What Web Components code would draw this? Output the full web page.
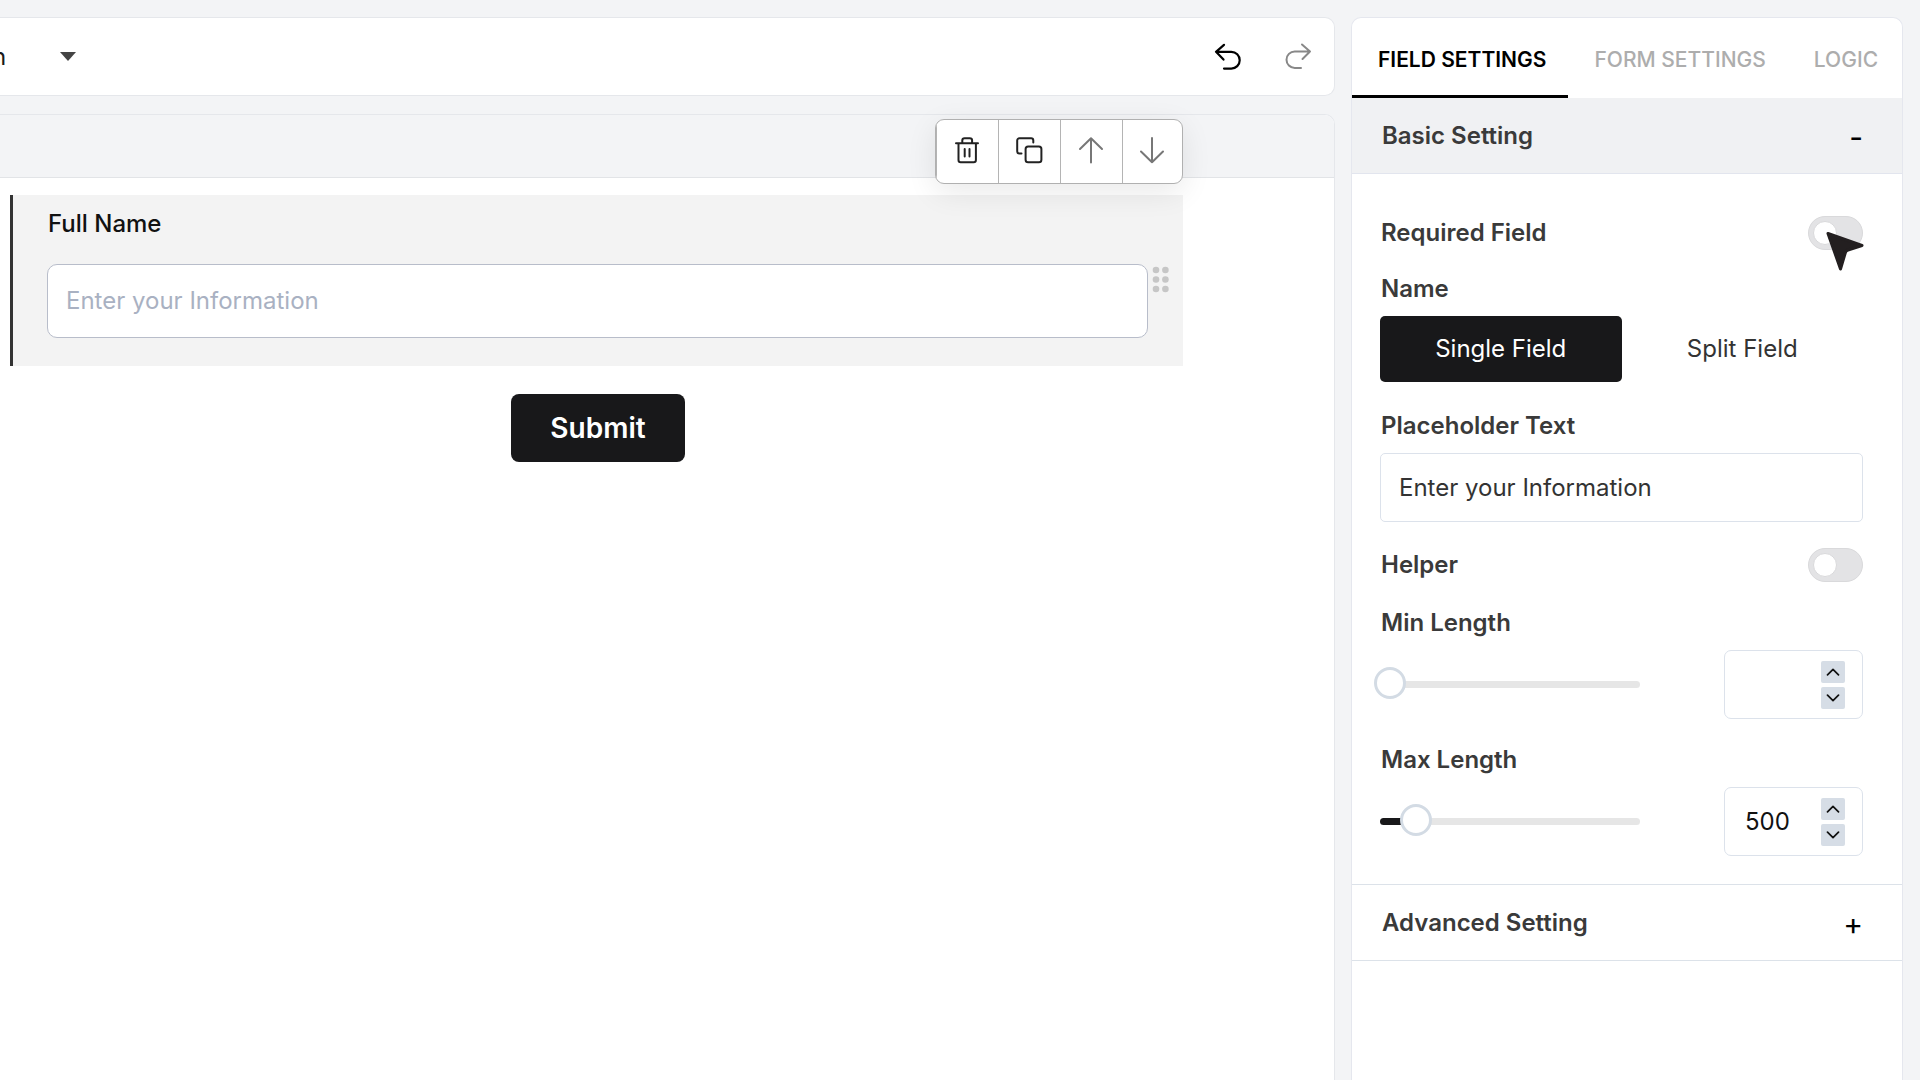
<!DOCTYPE html>
<html lang="en">
<head>
<meta charset="utf-8">
<title>Form builder</title>
<style>
  html, body { margin: 0; height: 100%; }
  body { background: #f3f4f6; font-family: Inter, "Liberation Sans", sans-serif; font-size: 24px; line-height: 30px; color: #333; overflow: hidden; }
</style>
</head>
<body>
<form-builder></form-builder>
<script>
const base = `
  *, *::before, *::after { box-sizing: border-box; }
  button, input, select { font: inherit; color: inherit; margin: 0; }
  button { border: 0; background: none; padding: 0; cursor: pointer; }
  svg { display: block; fill: none; stroke: currentColor; stroke-linecap: round; stroke-linejoin: round; }
`;
function define(name, css, html) {
  customElements.define(name, class extends HTMLElement {
    connectedCallback() {
      if (this.shadowRoot) return;
      const root = this.attachShadow({ mode: 'open' });
      root.innerHTML = `<style>${base}${css}</style>` + (typeof html === 'function' ? html(this) : html);
    }
  });
}

define('top-bar', `
  :host { display: flex; align-items: center; height: 79px; background: #fff; border: 1px solid #e5e7eb; border-left: 0; border-radius: 0 10px 10px 0; padding-right: 22px; }
  label { display: flex; align-items: center; flex: 1; gap: 53px; margin-left: -8px; color: #1a1a1a; }
  select { appearance: none; border: 0; background: none; padding: 0; outline: 0; }
  .caret { fill: #444; stroke: none; }
  .history { display: flex; gap: 42px; }
  .undo { color: #000; }
  .redo { color: #888; }
`, `
  <label>
    <select aria-label="Form"><option>n</option></select>
    <svg class="caret" width="16" height="9" viewBox="0 0 16 9"><path d="M0 0h16L8 9z"/></svg>
  </label>
  <div class="history">
    <button class="undo" aria-label="Undo"><svg width="28" height="28" viewBox="0 0 28 28" stroke-width="2.2"><path d="M10 1.800 2 8.800l7.500 7.800M2 8.800h15.300a8.400 8.400 0 0 1 0 16.800H10"/></svg></button>
    <button class="redo" aria-label="Redo"><svg width="28" height="28" viewBox="0 0 28 28" stroke-width="2"><path d="m18 1.500 8 7-7.500 7.500M26 8.500H10.700a8.200 8.200 0 0 0 0 16.400H17"/></svg></button>
  </div>
`);

define('block-toolbar', `
  :host { display: flex; border: 1px solid #b0b0b0; border-radius: 9px; background: #fff; box-shadow: 0 8px 30px rgba(0,0,0,.09); overflow: hidden; }
  button { width: 62px; height: 63px; display: grid; place-items: center; color: #222; border-left: 1px solid #b4b4b4; padding: 0 2px 4px 0; }
  button:first-child, button:last-child { width: 60px; }
  button:first-child { border-left: 0; }
  .move { color: #777; }
`, `
  <button aria-label="Delete"><svg width="28" height="28" viewBox="0 0 28 28" stroke-width="2"><path d="M3 7.200h22M5.500 7.200V24a2.200 2.200 0 0 0 2.200 2.200h13A2.200 2.200 0 0 0 22.900 24V7.200M9.300 7V4.500A2.300 2.300 0 0 1 11.600 2.200h5.200a2.300 2.300 0 0 1 2.300 2.300V7M11.700 13v7.500M16.500 13v7.500"/></svg></button>
  <button aria-label="Duplicate"><svg width="28" height="28" viewBox="0 0 28 28" stroke-width="2"><rect x="10.600" y="10.400" width="15.800" height="15.800" rx="2.500"/><path d="M18.300 6.500V4.400a2.200 2.200 0 0 0-2.200-2.200H4.400a2.200 2.200 0 0 0-2.200 2.200v10.800a2.200 2.200 0 0 0 2.200 2.200H6.500"/></svg></button>
  <button class="move" aria-label="Move up"><svg width="28" height="28" viewBox="0 0 28 28" stroke-width="2"><path d="M14 26.500V2.200M3 13 14 2.200 25 13"/></svg></button>
  <button class="move" aria-label="Move down"><svg width="28" height="28" viewBox="0 0 28 28" stroke-width="2"><path d="M14 2v24.300M3 15.500l11 10.800 11-10.800"/></svg></button>
`);

define('form-block', `
  :host { display: block; position: relative; background: #f3f3f3; border-left: 3px solid #333; padding: 14px 35px 28px 34px; }
  label { display: block; font-weight: 500; color: #111; margin-bottom: 25px; padding-left: 1px; }
  input { display: block; width: 100%; height: 74px; border: 1px solid #b8bdca; border-radius: 10px; background: #fff; padding: 0 18px 2px; outline: 0; }
  input::placeholder { color: #a9b1c2; opacity: 1; }
  block-toolbar { position: absolute; right: 0; top: -76px; z-index: 1; }
  .grip { position: absolute; right: 13px; top: 71px; cursor: grab; color: #c6c6c6; }
  .grip svg { fill: currentColor; stroke: none; }
`, `
  <block-toolbar></block-toolbar>
  <label for="name">Full Name</label>
  <input id="name" type="text" placeholder="Enter your Information">
  <button class="grip" aria-label="Drag"><svg width="18" height="27" viewBox="0 0 18 27"><circle cx="4" cy="4" r="3.300"/><circle cx="13.400" cy="4" r="3.300"/><circle cx="4" cy="13.500" r="3.300"/><circle cx="13.400" cy="13.500" r="3.300"/><circle cx="4" cy="23" r="3.300"/><circle cx="13.400" cy="23" r="3.300"/></svg></button>
`);

define('form-canvas', `
  :host { display: flex; flex-direction: column; flex: 1; background: #fff; border: 1px solid #e5e7eb; border-left: 0; border-bottom: 0; border-top-right-radius: 10px; }
  header { height: 63px; background: #f3f4f6; border-bottom: 1px solid #e2e4e7; border-top-right-radius: 9px; }
  main { display: flex; flex-direction: column; gap: 28px; padding: 17px 151px 0 13px; }
  form-block { margin-left: -3px; }
  .submit { align-self: center; height: 68px; padding: 0 39px; border-radius: 8px; background: #18181a; color: #fff; font-size: 28px; font-weight: 600; }
`, `
  <header></header>
  <main>
    <form-block></form-block>
    <button class="submit" type="submit">Submit</button>
  </main>
`);

define('setting-section', `
  :host { display: block; }
  .head { display: flex; justify-content: space-between; align-items: center; width: 100%; height: 76px; padding: 0 39px 0 30px; border-bottom: 1px solid #dce2e9; font-weight: 600; color: #3a3a3a; text-align: left; }
  :host([open]) .head { background: #f0f1f3; border-color: #e2e5ee; }
  .sign { font-size: 30px; font-weight: 400; color: #000; padding-top: 2px; }
  .body { padding: 42px 39px 28px 28px; border-bottom: 1px solid #dce2e9; }
  :host(:not([open])) .body { display: none; }
`, el => `
  <button class="head" aria-expanded="${el.hasAttribute('open')}"><span>${el.getAttribute('heading')}</span><span class="sign">${el.hasAttribute('open') ? '-' : '+'}</span></button>
  <div class="body"><slot></slot></div>
`);

define('toggle-row', `
  :host { display: flex; align-items: center; justify-content: space-between; height: 34px; position: relative; }
  label { font-weight: 600; color: #3a3a3a; padding-left: 1px; }
  input { appearance: none; width: 55px; height: 34px; border-radius: 17px; background: #e3e3e5; border: 1px solid #d9d9db; padding: 4px; display: flex; align-items: center; }
  input::before { content: ""; width: 24px; height: 24px; border-radius: 50%; background: #fff; border: 1px solid #d9d9db; }
  ::slotted(*) { position: absolute; right: -2px; top: 15px; }
`, el => `<label for="t">${el.getAttribute('label')}</label><input id="t" type="checkbox" role="switch"><slot></slot>`);

define('mouse-pointer', `
  :host { display: block; pointer-events: none; color: #231f20; }
  svg { fill: currentColor; }
`, `<svg width="40" height="41" viewBox="0 0 40 41" stroke-width="3"><path d="m3 2.500 34 12-14 4.500q-2 .7-2.600 2.500L15.500 38z"/></svg>`);

define('field-group', `
  :host { display: block; }
  .label { font-weight: 600; color: #3a3a3a; margin-bottom: 12px; padding-left: 1px; display: block; }
`, el => `<span class="label">${el.getAttribute('label')}</span><slot></slot>`);

define('segment-choice', `
  :host { display: grid; grid-template-columns: 1fr 1fr; }
  button { height: 66px; border-radius: 5px; }
  button[aria-pressed=true] { background: #18181a; color: #fff; }
`, `<button aria-pressed="true">Single Field</button><button aria-pressed="false">Split Field</button>`);

define('text-box', `
  :host { display: block; }
  label { font-weight: 600; color: #3a3a3a; margin-bottom: 12px; padding-left: 1px; display: block; }
  input { display: block; width: 100%; height: 69px; padding: 0 18px; border: 1px solid #dce2eb; border-radius: 5px; background: #fff; outline: 0; }
`, el => `<label for="i">${el.getAttribute('label')}</label><input id="i" type="text" value="${el.getAttribute('value')}">`);

define('length-control', `
  :host { display: block; }
  label { font-weight: 600; color: #3a3a3a; margin-bottom: 12px; padding-left: 1px; display: block; }
  .row { display: flex; align-items: center; justify-content: space-between; }
  .slider { display: grid; align-items: center; width: 260px; }
  .slider > * { grid-area: 1 / 1; }
  .track { height: 7px; border-radius: 4px; background: linear-gradient(#18181a, #18181a) 0 0 / var(--fill) 100% no-repeat #e6e6e6; }
  input[type=range] { appearance: none; background: none; height: 36px; margin-left: -6px; padding-bottom: 4px; outline: 0; }
  input[type=range]::-webkit-slider-thumb { appearance: none; width: 32px; height: 32px; border-radius: 50%; background: #fff; border: 3px solid #d3dbe4; }
  .number { display: flex; align-items: center; width: 139px; height: 69px; border: 1px solid #dce2eb; border-radius: 7px; padding: 0 17px 0 20px; }
  input[type=number] { appearance: textfield; flex: 1; min-width: 0; border: 0; padding: 0; background: none; color: #111; outline: 0; }
  input[type=number]::-webkit-inner-spin-button { display: none; }
  .steps { display: grid; gap: 4px; }
  .steps button { width: 24px; height: 22px; border-radius: 2px; background: #d6dde6; color: #111; display: grid; place-items: center; }
`, el => {
  const v = el.getAttribute('value') || '';
  return `
  <label for="n">${el.getAttribute('label')}</label>
  <div class="row">
    <div class="slider">
      <div class="track" style="--fill:${v ? 36 : 0}px"></div>
      <input type="range" min="0" max="4500" value="${v || 0}" aria-label="${el.getAttribute('label')}">
    </div>
    <div class="number">
      <input id="n" type="number" value="${v}">
      <div class="steps">
        <button aria-label="Increase"><svg width="14" height="8" viewBox="0 0 14 8" stroke-width="1.700"><path d="m1.500 6.800 5.500-5.500 5.500 5.500"/></svg></button>
        <button aria-label="Decrease"><svg width="14" height="8" viewBox="0 0 14 8" stroke-width="1.700"><path d="m1.500 1.200 5.500 5.500 5.500-5.500"/></svg></button>
      </div>
    </div>
  </div>`;
});

define('settings-panel', `
  :host { display: block; background: #fff; border: 1px solid #e5e7ee; border-bottom: 0; border-radius: 10px 10px 0 0; }
  nav { display: flex; font-size: 21px; line-height: 26px; font-weight: 500; color: #adadad; }
  nav button { padding: 29px 22px 22px 26px; border-bottom: 3px solid transparent; white-space: nowrap; }
  nav button[aria-selected=true] { color: #000; border-color: #000; font-weight: 600; }
  .stack { display: flex; flex-direction: column; }
  .stack > * { margin-top: 26px; }
  .stack > :first-child { margin-top: 0; }
  .stack > field-group { margin-top: 24px; }
  .stack > text-box { margin-top: 29px; }
`, `
  <nav role="tablist">
    <button role="tab" aria-selected="true">FIELD SETTINGS</button>
    <button role="tab" aria-selected="false">FORM SETTINGS</button>
    <button role="tab" aria-selected="false">LOGIC</button>
  </nav>
  <setting-section heading="Basic Setting" open>
    <div class="stack">
      <toggle-row label="Required Field"><mouse-pointer></mouse-pointer></toggle-row>
      <field-group label="Name"><segment-choice></segment-choice></field-group>
      <text-box label="Placeholder Text" value="Enter your Information"></text-box>
      <toggle-row label="Helper"></toggle-row>
      <length-control label="Min Length"></length-control>
      <length-control label="Max Length" value="500"></length-control>
    </div>
  </setting-section>
  <setting-section heading="Advanced Setting"></setting-section>
`);

define('form-builder', `
  :host { display: grid; grid-template-columns: minmax(0, 1fr) 552px; gap: 16px; min-height: 100vh; padding: 17px 17px 0 0; box-sizing: border-box; }
  .work { display: flex; flex-direction: column; gap: 18px; }
`, `
  <div class="work"><top-bar></top-bar><form-canvas></form-canvas></div>
  <settings-panel></settings-panel>
`);
</script>
</body>
</html>
